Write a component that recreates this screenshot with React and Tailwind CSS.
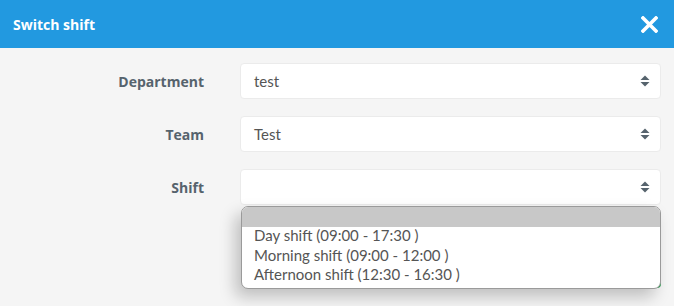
import React from 'react';

const Arrows = () => (
    <svg width="10" height="12" viewBox="0 0 10 12" className="text-[#56636d]">
        <path d="M5 0.5 L9.5 5 H0.5 Z" fill="currentColor" />
        <path d="M5 11.5 L9.5 7 H0.5 Z" fill="currentColor" />
    </svg>
);

const Select = ({ value }) => (
    <div className="flex-1 h-[36px] bg-white border border-[#ebebeb] rounded-[4px] flex items-center justify-between pl-[13px] pr-[10px]">
        <span className="text-[15px] text-[#555]">{value}</span>
        <Arrows />
    </div>
);

const Row = ({ label, children }) => (
    <div className="flex items-center">
        <div className="w-[204px] text-right text-[14px] font-bold text-[#56636d] font-['Open_Sans',sans-serif]">{label}</div>
        <div className="ml-[36px] flex-1 flex relative">{children}</div>
    </div>
);

export default function App() {
    return (
        <div className="w-[674px] h-[306px] bg-[#f5f5f5] overflow-hidden" style={{ fontFamily: 'Lato, "Open Sans", sans-serif' }}>
            {/* Header */}
            <div className="h-[48px] bg-[#2299e0] flex items-center justify-between pl-[13px] pr-[16px]">
                <h1 className="text-white font-bold text-[14px] font-['Open_Sans',sans-serif]">Switch shift</h1>
                <svg width="17" height="17" viewBox="0 0 17 17">
                    <path d="M2 2 L15 15 M15 2 L2 15" stroke="white" strokeWidth="3.6" strokeLinecap="square" />
                </svg>
            </div>

            <div className="pt-[15px] pr-[13px] flex flex-col gap-[17px]">
                <Row label="Department"><Select value="test" /></Row>
                <Row label="Team"><Select value="Test" /></Row>
                <Row label="Shift">
                    <Select value="" />
                    <div className="absolute left-[1px] right-0 top-[37px] z-10 bg-white rounded-[7px] border border-[#9a9a9a] shadow-[-6px_8px_16px_rgba(0,0,0,0.22)] overflow-hidden pb-[3px] text-[15px] text-[#555] leading-[19.5px]">
                        <div className="h-[20px] bg-[#c8c8c8]" />
                        <div className="pl-[12px] mt-[-1px]">Day shift (09:00 - 17:30 )</div>
                        <div className="pl-[12px]">Morning shift (09:00 - 12:00 )</div>
                        <div className="pl-[12px]">Afternoon shift (12:30 - 16:30 )</div>
                    </div>
                </Row>
            </div>

            {/* Buttons behind the dropdown */}
            <div className="flex justify-end pr-[13px] mt-[47px]">
                <div className="h-[36px] w-[80px] border border-[#ccc] rounded-[4px] bg-[#eee]" />
                <div className="h-[36px] w-[142px] rounded-[4px] bg-[#3aa55d]" />
            </div>
        </div>
    );
}
